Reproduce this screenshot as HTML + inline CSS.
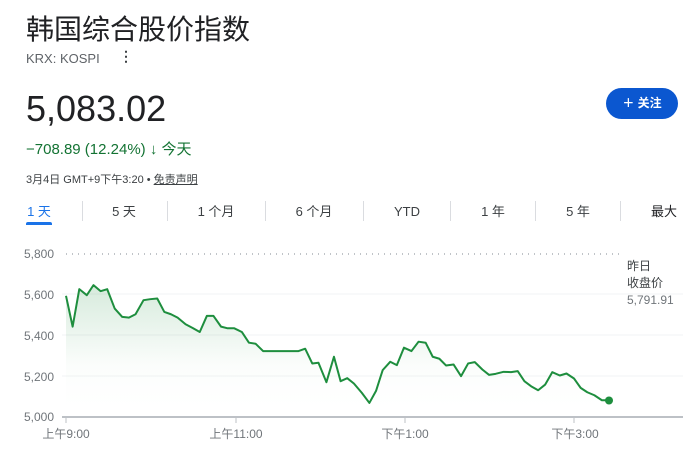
<!DOCTYPE html>
<html><head><meta charset="utf-8"><style>
body{margin:0;width:695px;height:454px;background:#fff;font-family:"Liberation Sans","Noto Sans CJK SC",sans-serif;position:relative;overflow:hidden;color:#202124}
.a{position:absolute;white-space:nowrap}
.tab{position:absolute;top:203px;height:18px;line-height:18px;font-size:13px;color:#3c4043;transform:translateX(-50%)}
.sep{position:absolute;top:201px;width:1px;height:20px;background:#dadce0}
.yl{position:absolute;left:24px;font-size:12px;color:#70757a}
.xl{position:absolute;top:425px;font-size:12px;color:#70757a;transform:translateX(-50%)}
</style></head><body>
<div class="a" style="left:26px;top:8px;font-size:28px;">韩国综合股价指数</div>
<div class="a" style="left:26px;top:51px;font-size:13px;color:#5f6368">KRX: KOSPI</div>
<div class="a" style="left:119px;top:48px;font-size:14px;font-weight:bold;color:#3c4043">⋮</div>
<div class="a" style="left:26px;top:88px;font-size:36px;">5,083.02</div>
<div class="a" style="left:26px;top:138px;font-size:15px;color:#137333">−708.89 (12.24%) <b>↓</b> 今天</div>
<div class="a" style="left:26px;top:171px;font-size:11px;color:#3c4043">3月4日 GMT+9下午3:20 • <span style="text-decoration:underline">免责声明</span></div>
<div class="a" style="left:606px;top:88px;width:72px;height:31px;border-radius:16px;background:#0b57d0;color:#fff;font-size:12px;font-weight:bold;line-height:31px;text-align:center">＋ 关注</div>
<div class="tab" style="left:39px;color:#1a73e8">1 天</div>
<div class="a" style="left:26px;top:222px;width:26px;height:3px;background:#1a73e8;border-radius:2px 2px 0 0"></div>
<div class="sep" style="left:82px"></div><div class="sep" style="left:167px"></div><div class="sep" style="left:265px"></div><div class="sep" style="left:363px"></div><div class="sep" style="left:450px"></div><div class="sep" style="left:535px"></div><div class="sep" style="left:620px"></div>
<div class="tab" style="left:124px">5 天</div>
<div class="tab" style="left:216px">1 个月</div>
<div class="tab" style="left:314px">6 个月</div>
<div class="tab" style="left:407px">YTD</div>
<div class="tab" style="left:493px">1 年</div>
<div class="tab" style="left:578px">5 年</div>
<div class="tab" style="left:664px;color:#202124">最大</div>
<div class="yl" style="top:247px">5,800</div>
<div class="yl" style="top:288px">5,600</div>
<div class="yl" style="top:329px">5,400</div>
<div class="yl" style="top:370px">5,200</div>
<div class="yl" style="top:410px">5,000</div>
<div class="a" style="left:627px;top:258px;font-size:12px;color:#3c4043;line-height:17px">昨日<br>收盘价<br><span style="color:#70757a">5,791.91</span></div>
<svg class="a" style="left:0;top:0" width="695" height="454">
<defs><linearGradient id="g" x1="0" y1="0" x2="0" y2="1"><stop offset="0" stop-color="#1e8e3e" stop-opacity="0.18"/><stop offset="0.6" stop-color="#1e8e3e" stop-opacity="0.02"/><stop offset="1" stop-color="#fff" stop-opacity="0"/></linearGradient></defs>
<line x1="66" y1="254" x2="622" y2="254" stroke="#9aa0a6" stroke-width="1.2" stroke-dasharray="1 5"/>
<line x1="62" y1="294" x2="683" y2="294" stroke="#f1f3f4"/>
<line x1="62" y1="335" x2="683" y2="335" stroke="#f1f3f4"/>
<line x1="62" y1="376" x2="683" y2="376" stroke="#f1f3f4"/>
<g transform="matrix(0.4429,0,0,0.3347,-0.435,228.9)">
<polygon fill="url(#g)" points="150,200 165,292 180,180 197,198 212,168 228,186 243,180 260,238 277,263 292,265 307,255 325,213 340,210 356,208 372,248 387,255 402,265 420,285 436,296 452,308 468,260 483,260 500,292 515,297 530,297 547,308 563,340 578,343 595,365 675,365 690,358 706,402 720,400 738,458 755,382 770,455 785,446 800,462 818,490 835,520 850,484 865,422 882,397 897,407 913,355 930,365 946,337 962,340 978,382 993,388 1008,408 1025,405 1042,440 1058,402 1073,398 1090,420 1105,436 1120,433 1138,427 1155,428 1170,425 1185,455 1200,470 1216,482 1232,465 1248,428 1265,438 1280,432 1297,447 1312,475 1327,488 1343,497 1360,512 1375,512 1375,562 150,562"/>
<polyline fill="none" stroke="#1e8e3e" stroke-width="2" vector-effect="non-scaling-stroke" stroke-linejoin="round" points="150,200 165,292 180,180 197,198 212,168 228,186 243,180 260,238 277,263 292,265 307,255 325,213 340,210 356,208 372,248 387,255 402,265 420,285 436,296 452,308 468,260 483,260 500,292 515,297 530,297 547,308 563,340 578,343 595,365 675,365 690,358 706,402 720,400 738,458 755,382 770,455 785,446 800,462 818,490 835,520 850,484 865,422 882,397 897,407 913,355 930,365 946,337 962,340 978,382 993,388 1008,408 1025,405 1042,440 1058,402 1073,398 1090,420 1105,436 1120,433 1138,427 1155,428 1170,425 1185,455 1200,470 1216,482 1232,465 1248,428 1265,438 1280,432 1297,447 1312,475 1327,488 1343,497 1360,512 1375,512"/>
</g>
<line x1="62" y1="417" x2="683" y2="417" stroke="#bdc1c6" stroke-width="2"/>
<g stroke="#bdc1c6" stroke-width="1"><line x1="66" y1="417" x2="66" y2="423"/><line x1="236" y1="417" x2="236" y2="423"/><line x1="405" y1="417" x2="405" y2="423"/><line x1="574" y1="417" x2="574" y2="423"/></g>
<circle cx="609" cy="400.5" r="4" fill="#1e8e3e"/>
</svg>
<div class="xl" style="left:66px">上午9:00</div>
<div class="xl" style="left:236px">上午11:00</div>
<div class="xl" style="left:405px">下午1:00</div>
<div class="xl" style="left:575px">下午3:00</div>
</body></html>
